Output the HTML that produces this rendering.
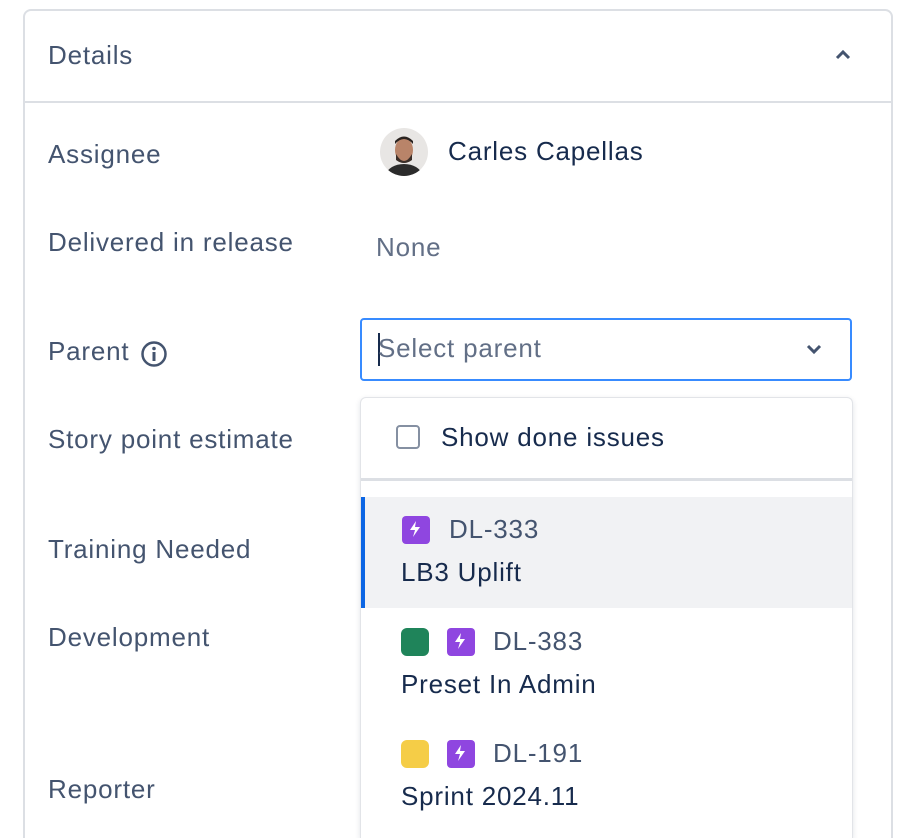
<!DOCTYPE html>
<html style="overflow:hidden;height:838px"><head><style>
body{margin:0;width:910px;height:838px;background:#fff;font-family:"Liberation Sans",sans-serif;position:relative;overflow:hidden}
.panel{position:absolute;left:23px;top:9px;width:870px;height:829px;border:2px solid #dcdfe4;border-bottom:none;border-radius:8px 8px 0 0;box-sizing:border-box}
.hdr{position:absolute;left:23px;top:101px;width:870px;height:2px;background:#dcdfe4}
.t{position:absolute;font-size:26px;letter-spacing:0.8px;color:#44546f;white-space:nowrap}
.v{color:#172b4d}
.sel{position:absolute;left:360px;top:318px;width:492px;height:63px;border:2px solid #388bff;border-radius:4px;box-sizing:border-box}
.dd{position:absolute;left:360px;top:397px;width:493px;height:441px;border:1px solid #e2e4e8;border-bottom:none;border-radius:6px 6px 0 0;background:#fff;box-shadow:0 2px 6px rgba(9,30,66,.12);overflow:hidden;box-sizing:border-box}
.ep{position:absolute;width:28px;height:28px;border-radius:4px;background:#8f46e0}
.sq{position:absolute;width:28px;height:28px;border-radius:6px}
</style></head><body>
<div class="panel"></div>
<div class="hdr"></div>
<div class="t" style="left:48px;top:40px">Details</div>
<svg style="position:absolute;left:834px;top:48px" width="18" height="14" viewBox="0 0 18 14"><path d="M3 10 L9 4 L15 10" stroke="#44546f" stroke-width="3" fill="none"/></svg>
<div class="t" style="left:48px;top:139px">Assignee</div>
<svg style="position:absolute;left:380px;top:128px" width="48" height="48" viewBox="0 0 48 48"><defs><clipPath id="c"><circle cx="24" cy="24" r="24"/></clipPath></defs><g clip-path="url(#c)"><rect width="48" height="48" fill="#e8e6e4"/><ellipse cx="24" cy="22" rx="9" ry="12" fill="#b98469"/><path d="M15 16 Q24 6 33 16 L33 13 Q24 4 15 13Z" fill="#2a2320"/><path d="M16 26 Q24 40 32 26 L32 32 Q24 38 16 32Z" fill="#3a2e28"/><path d="M4 48 Q10 36 24 36 Q38 36 44 48Z" fill="#2b2b2b"/></g></svg>
<div class="t v" style="left:448px;top:136px">Carles Capellas</div>
<div class="t" style="left:48px;top:227px">Delivered in release</div>
<div class="t" style="left:376px;top:232px;color:#626f86">None</div>
<div class="t" style="left:48px;top:336px">Parent</div>
<svg style="position:absolute;left:140px;top:340px" width="28" height="28" viewBox="0 0 28 28"><circle cx="14" cy="14" r="11.5" stroke="#44546f" stroke-width="2.5" fill="none"/><rect x="12.5" y="12" width="3" height="9" fill="#44546f"/><circle cx="14" cy="8.5" r="1.8" fill="#44546f"/></svg>
<div class="t" style="left:48px;top:424px">Story point estimate</div>
<div class="t" style="left:48px;top:534px">Training Needed</div>
<div class="t" style="left:48px;top:622px">Development</div>
<div class="t" style="left:48px;top:774px">Reporter</div>
<div class="sel"></div>
<div style="position:absolute;left:378px;top:333px;width:2px;height:33px;background:#172b4d"></div>
<div class="t" style="left:378px;top:333px;color:#626f86">Select parent</div>
<svg style="position:absolute;left:805px;top:342px" width="18" height="14" viewBox="0 0 18 14"><path d="M3 4 L9 10 L15 4" stroke="#44546f" stroke-width="3" fill="none"/></svg>
<div class="dd">
<div style="position:absolute;left:35px;top:27px;width:24px;height:24px;border:2px solid #8590a2;border-radius:4px;box-sizing:border-box"></div>
<div class="t v" style="left:80px;top:24px">Show done issues</div>
<div style="position:absolute;left:0;top:80px;width:100%;height:3px;background:#dcdfe4"></div>
<div style="position:absolute;left:0;top:99px;width:100%;height:111px;background:#f1f2f4"></div>
<div style="position:absolute;left:0;top:99px;width:4px;height:111px;background:#0c66e4"></div>
<div class="ep" style="left:41px;top:118px"></div>
<div class="t" style="left:88px;top:116px;color:#44546f">DL-333</div>
<div class="t v" style="left:40px;top:159px">LB3 Uplift</div>
<div class="sq" style="left:40px;top:230px;background:#1f845a"></div>
<div class="ep" style="left:86px;top:230px"></div>
<div class="t" style="left:132px;top:228px;color:#44546f">DL-383</div>
<div class="t v" style="left:40px;top:271px">Preset In Admin</div>
<div class="sq" style="left:40px;top:342px;background:#f5cd47"></div>
<div class="ep" style="left:86px;top:342px"></div>
<div class="t" style="left:132px;top:340px;color:#44546f">DL-191</div>
<div class="t v" style="left:40px;top:383px">Sprint 2024.11</div>
</div>
<svg style="position:absolute;left:401px;top:515px" width="28" height="28" viewBox="0 0 28 28"><path d="M15 6 L9 15 H14 L12 22 L19 12 H14 Z" fill="#fff"/></svg>
<svg style="position:absolute;left:446px;top:627px" width="28" height="28" viewBox="0 0 28 28"><path d="M15 6 L9 15 H14 L12 22 L19 12 H14 Z" fill="#fff"/></svg>
<svg style="position:absolute;left:446px;top:739px" width="28" height="28" viewBox="0 0 28 28"><path d="M15 6 L9 15 H14 L12 22 L19 12 H14 Z" fill="#fff"/></svg>
</body></html>
